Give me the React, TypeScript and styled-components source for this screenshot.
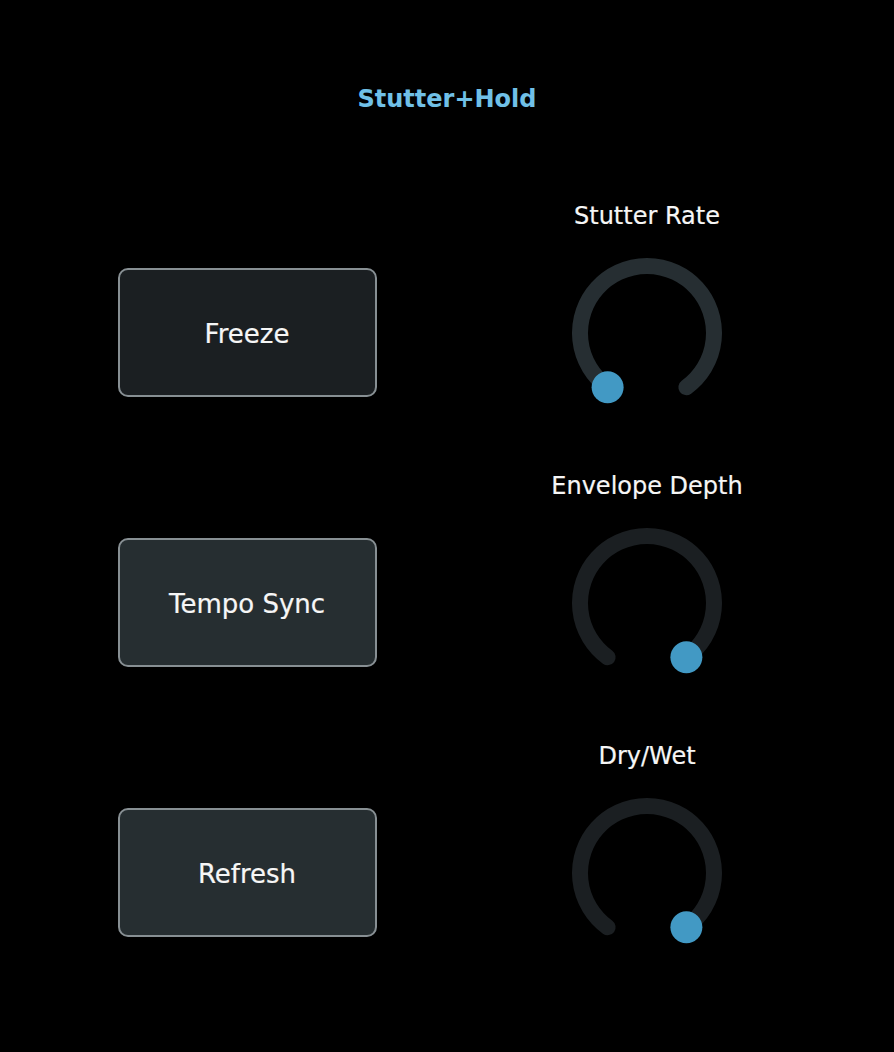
import React from "react";
import styled, { createGlobalStyle } from "styled-components";

const GlobalStyle = createGlobalStyle`
  html, body {
    margin: 0;
    padding: 0;
    background: #000000;
  }
  body {
    font-family: "DejaVu Sans", "Liberation Sans", sans-serif;
    color: #f2f2f2;
  }
`;

const Page = styled.div`
  min-height: 1052px;
  display: flex;
  flex-direction: column;
  align-items: center;
  padding-top: 85px;
  box-sizing: border-box;
  background: #000000;
`;

const Title = styled.h1`
  margin: 0;
  font-size: 24px;
  line-height: 28px;
  font-weight: bold;
  color: #70c0e7;
`;

const Rows = styled.div`
  margin-top: 89px;
  display: flex;
  flex-direction: column;
  gap: 59px;
`;

const Row = styled.div`
  display: grid;
  grid-template-columns: 400px 400px;
  grid-template-rows: 28px 160px;
  row-gap: 23px;
`;

const Label = styled.div`
  grid-column: 2;
  grid-row: 1;
  text-align: center;
  font-size: 24px;
  line-height: 28px;
  color: #f6f6f6;
  -webkit-text-stroke: 0.2px #f6f6f6;
`;

const KnobCell = styled.div`
  grid-column: 2;
  grid-row: 2;
  display: flex;
  justify-content: center;
`;

const ButtonCell = styled.div`
  grid-column: 1;
  grid-row: 2;
  display: flex;
  align-items: center;
  justify-content: center;
`;

const ActionButton = styled.button<{ $bg: string }>`
  width: 259px;
  height: 129px;
  box-sizing: border-box;
  border: 2px solid #878f93;
  border-radius: 10px;
  background: ${(p) => p.$bg};
  color: #f6f6f6;
  -webkit-text-stroke: 0.2px #f6f6f6;
  font-family: "DejaVu Sans", "Liberation Sans", sans-serif;
  font-size: 26px;
  line-height: 30px;
  padding: 2px 0 0 0;
  margin-top: -1px;
  cursor: pointer;
`;

const KnobSvg = styled.svg`
  display: block;
  width: 160px;
  height: 160px;
`;

const C = 80;
const R = 67;
const SPAN = 144;

function point(deg: number) {
  const rad = (deg * Math.PI) / 180;
  return { x: C + R * Math.sin(rad), y: C - R * Math.cos(rad) };
}

function Knob({ value, track }: { value: number; track: string }) {
  const a = point(-SPAN);
  const b = point(SPAN);
  const d = point(-SPAN + value * 2 * SPAN);
  return (
    <KnobSvg viewBox="0 0 160 160">
      <path
        d={`M ${a.x} ${a.y} A ${R} ${R} 0 1 1 ${b.x} ${b.y}`}
        fill="none"
        stroke={track}
        strokeWidth={16}
        strokeLinecap="round"
      />
      <circle cx={d.x} cy={d.y} r={16} fill="#4299c4" />
    </KnobSvg>
  );
}

const rows = [
  { button: "Freeze", bg: "#1b1f22", label: "Stutter Rate", value: 0, track: "#262e32" },
  { button: "Tempo Sync", bg: "#262e31", label: "Envelope Depth", value: 1, track: "#1b1f22" },
  { button: "Refresh", bg: "#262e31", label: "Dry/Wet", value: 1, track: "#1b1f22" },
];

export default function App() {
  return (
    <>
      <GlobalStyle />
      <Page>
        <Title>Stutter+Hold</Title>
        <Rows>
          {rows.map((r) => (
            <Row key={r.label}>
              <Label>{r.label}</Label>
              <KnobCell>
                <Knob value={r.value} track={r.track} />
              </KnobCell>
              <ButtonCell>
                <ActionButton $bg={r.bg}>{r.button}</ActionButton>
              </ButtonCell>
            </Row>
          ))}
        </Rows>
      </Page>
    </>
  );
}
